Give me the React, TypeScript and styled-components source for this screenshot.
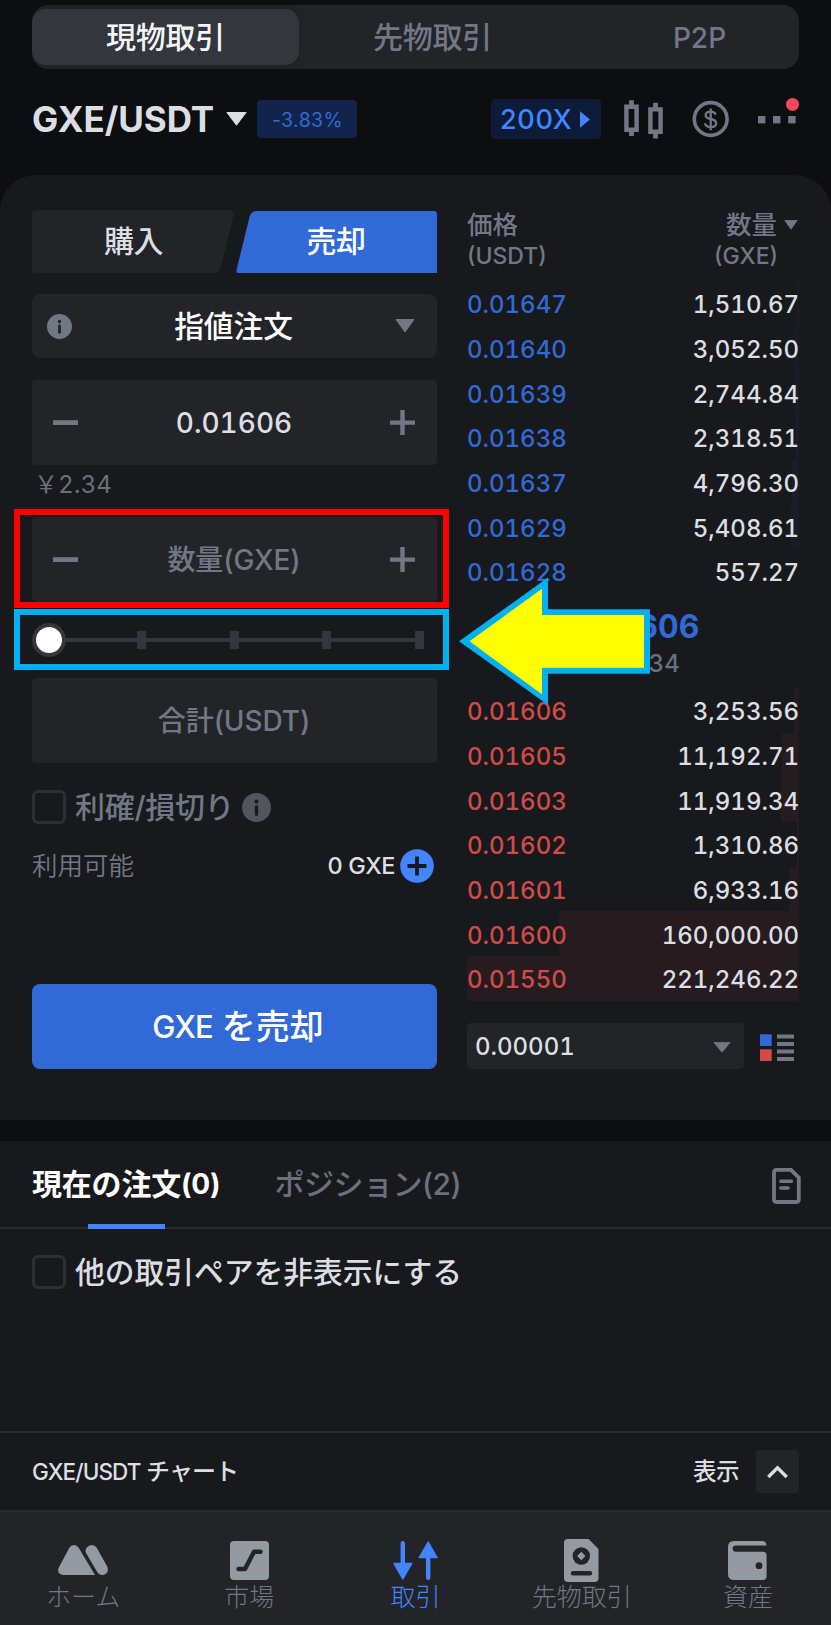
import React from 'react';
import styled, { createGlobalStyle } from 'styled-components';

const c = {
  base: '#0d0e0f',
  panel: '#18191c',
  field: '#222428',
  raised: '#33363d',
  line: '#2a2b30',
  grey: '#717785',
  dim: '#6a707d',
  text: '#dcdee3',
  white: '#ffffff',
  blue: '#316ad6',
  bright: '#4285ff',
  red: '#d14b48',
};

const GlobalStyle = createGlobalStyle`
  * { box-sizing: border-box; }
  body {
    margin: 0;
    background: ${c.base};
    font-family: Inter, "Noto Sans CJK JP", sans-serif;
  }
  svg { display: block; flex: none; }
`;

const Text = styled.span<{ $size: number; $color?: string; $weight?: number; $ls?: number; $lh?: number }>`
  font-size: ${p => p.$size}px;
  font-weight: ${p => p.$weight ?? 450};
  color: ${p => p.$color ?? c.text};
  letter-spacing: ${p => p.$ls ?? 0}px;
  line-height: ${p => p.$lh ?? 36}px;
  white-space: pre;
  flex: none;
`;

const Digits = styled(Text)`
  font-variant-numeric: tabular-nums;
`;

const Screen = styled.div`
  position: relative;
  width: 831px;
  height: 1625px;
  overflow: hidden;
  display: flex;
  flex-direction: column;
  background: ${c.base};
`;

/* ---------- market switch ---------- */
const Segments = styled.nav`
  margin: 5px 32px 0;
  height: 64px;
  flex: none;
  display: flex;
  align-items: center;
  background: ${c.field};
  border-radius: 16px;
  overflow: hidden;
`;
const Segment = styled.div<{ $active?: boolean; $drop?: number }>`
  flex: 0 0 267px;
  height: 56px;
  padding-top: ${p => p.$drop ?? 0}px;
  display: flex;
  align-items: center;
  justify-content: center;
  border-radius: 14px;
  background: ${p => (p.$active ? c.raised : 'transparent')};
  box-shadow: ${p => (p.$active ? '0 0 10px rgba(0, 0, 0, 0.12)' : 'none')};
`;

/* ---------- pair header ---------- */
const PairBar = styled.header`
  height: 106px;
  flex: none;
  display: flex;
  align-items: center;
  padding: 0 32px 6px;
`;
const PairName = styled.div`
  display: flex;
  align-items: center;
  gap: 12px;
  width: 225px;
`;
const Change = styled.div`
  width: 100px;
  height: 38px;
  padding: 2px 0 0 1px;
  display: flex;
  align-items: center;
  justify-content: center;
  border-radius: 4px;
  background: #12244b;
`;
const Leverage = styled.div`
  width: 110px;
  height: 40px;
  margin-left: auto;
  padding: 1px 11px 0 9px;
  display: flex;
  align-items: center;
  justify-content: space-between;
  border-radius: 4px;
  background: #0d1b38;
`;
const HeaderIcons = styled.div`
  width: 198px;
  padding-left: 23px;
  display: flex;
  align-items: center;
`;

/* ---------- trading panel ---------- */
const Panel = styled.main`
  height: 945px;
  flex: none;
  display: flex;
  gap: 30px;
  padding: 35px 32px 0;
  background: ${c.panel};
  border-radius: 36px 36px 0 0;
`;
const Form = styled.section`
  width: 405px;
  display: flex;
  flex-direction: column;
`;
const SideTabs = styled.div`
  height: 63px;
  display: flex;
  justify-content: space-between;
  align-items: flex-end;
`;
const BuyTab = styled.div`
  width: 202px;
  height: 63px;
  padding: 0 0 2px 1px;
  display: flex;
  align-items: center;
  justify-content: center;
  background: ${c.field};
  clip-path: path('M4 0 H197 Q203 0 201.5 6 L189 57 Q187.5 63 181 63 H4 Q0 63 0 59 V4 Q0 0 4 0 Z');
`;
const SellTab = styled.div`
  width: 201px;
  height: 62px;
  padding: 0 1px 3px 0;
  display: flex;
  align-items: center;
  justify-content: center;
  background: ${c.blue};
  clip-path: path('M21 0 H198 Q201 0 201 3 V62 H2 Q0 62 0.5 59 L13.5 6 Q15 0 21 0 Z');
`;
const OrderType = styled.div`
  height: 64px;
  margin-top: 21px;
  padding: 0 22px 0 15px;
  display: flex;
  align-items: center;
  justify-content: space-between;
  border-radius: 8px;
  background: ${c.field};
`;
const Field = styled.div<{ $top: number; $center?: boolean }>`
  height: 85px;
  margin-top: ${p => p.$top}px;
  padding: 0 22px 0 21px;
  display: flex;
  align-items: center;
  justify-content: ${p => (p.$center ? 'center' : 'space-between')};
  border-radius: 4px;
  background: ${c.field};
`;
const Fiat = styled.div`
  height: 52px;
  padding: 2px 0 0 2px;
  display: flex;
  align-items: flex-start;
`;
const Slider = styled.div`
  height: 34px;
  margin: 21px 1px 0 0;
  display: flex;
  align-items: center;
  justify-content: space-between;
  background: linear-gradient(${c.raised}, ${c.raised}) 17px 50% / 370px 4px no-repeat;
`;
const Stop = styled.div`
  width: 34px;
  display: flex;
  justify-content: center;
  &::after {
    content: '';
    width: 9px;
    height: 18px;
    background: ${c.raised};
  }
`;
const Knob = styled.div`
  width: 34px;
  height: 34px;
  border: 4px solid ${c.raised};
  border-radius: 50%;
  background: ${c.white};
`;
const CheckRow = styled.label<{ $top: number; $left?: number }>`
  height: 34px;
  margin: ${p => p.$top}px 0 0 ${p => p.$left ?? 0}px;
  display: flex;
  align-items: center;
`;
const Box = styled.span`
  width: 34px;
  height: 34px;
  margin-right: 9px;
  border: 3px solid #2c2f36;
  border-radius: 6px;
  flex: none;
`;
const HelpIcon = styled.span`
  margin-left: 8px;
`;
const Available = styled.div`
  height: 36px;
  margin-top: 24px;
  padding-right: 3px;
  display: flex;
  align-items: center;
  justify-content: space-between;
`;
const Balance = styled.div`
  display: flex;
  align-items: center;
  gap: 5px;
`;
const Submit = styled.div`
  height: 85px;
  margin-top: 100px;
  padding-left: 7px;
  display: flex;
  align-items: center;
  justify-content: center;
  gap: 9px;
  border-radius: 8px;
  background: ${c.blue};
`;

/* ---------- order book ---------- */
const Book = styled.section`
  width: 332px;
  display: flex;
  flex-direction: column;
`;
const BookHead = styled.div`
  height: 71px;
  display: flex;
  justify-content: space-between;
`;
const HeadCol = styled.div<{ $end?: boolean }>`
  display: flex;
  flex-direction: column;
  align-items: ${p => (p.$end ? 'flex-end' : 'flex-start')};
  padding-right: ${p => (p.$end ? 21 : 0)}px;
  margin-top: -1px;
`;
const SortLabel = styled.div`
  display: flex;
  align-items: center;
  gap: 7px;
  margin-right: -20px;
`;
const Level = styled.div<{ $tint: string; $depth: number }>`
  height: 44.7px;
  flex: none;
  padding: 4px 0 0;
  display: flex;
  align-items: center;
  justify-content: space-between;
  background: linear-gradient(to left, ${p => p.$tint} ${p => p.$depth}%, transparent ${p => p.$depth}%);
`;
const LastPrice = styled.div`
  height: 94px;
  flex: none;
  display: flex;
  flex-direction: column;
  align-items: center;
  padding-top: 15px;
`;
const BookFoot = styled.div`
  height: 46px;
  margin-top: 22px;
  display: flex;
  align-items: center;
  gap: 16px;
`;
const Precision = styled.div`
  width: 277px;
  height: 46px;
  padding: 3px 13px 0 8px;
  display: flex;
  align-items: center;
  justify-content: space-between;
  border-radius: 4px;
  background: ${c.field};
`;
const DepthToggle = styled.div`
  padding-top: 4px;
`;

/* ---------- orders ---------- */
const Orders = styled.section`
  height: 290px;
  margin-top: 21px;
  flex: none;
  background: ${c.panel};
`;
const OrderTabs = styled.div`
  height: 88px;
  padding: 0 30px 0 32px;
  display: flex;
  align-items: center;
  border-bottom: 2px solid ${c.line};
`;
const OrderTab = styled.div<{ $active?: boolean }>`
  position: relative;
  height: 86px;
  margin-right: ${p => (p.$active ? 54 : 0)}px;
  display: flex;
  align-items: center;
  &::after {
    content: '';
    display: ${p => (p.$active ? 'block' : 'none')};
    position: absolute;
    left: 56px;
    bottom: -2px;
    width: 77px;
    height: 5px;
    background: ${c.bright};
  }
`;
const OrderHistory = styled.div`
  margin-left: auto;
  padding-top: 3px;
`;
const ChartBar = styled.div`
  height: 79px;
  flex: none;
  padding: 0 32px;
  display: flex;
  align-items: center;
  background: ${c.panel};
  border-top: 2px solid ${c.line};
`;
const Expand = styled.div`
  width: 43px;
  height: 43px;
  margin-left: 17px;
  display: flex;
  align-items: center;
  justify-content: center;
  border-radius: 4px;
  background: ${c.field};
`;
const Spacer = styled.div`
  flex: 1;
`;

/* ---------- bottom navigation ---------- */
const BottomNav = styled.nav`
  height: 115px;
  flex: none;
  display: grid;
  grid-template-columns: repeat(5, 1fr);
  background: ${c.field};
  border-top: 2px solid ${c.line};
`;
const NavItem = styled.div`
  display: flex;
  flex-direction: column;
  align-items: center;
  padding-top: 24px;
`;
const NavIcon = styled.div`
  height: 48px;
  margin-bottom: -5px;
  display: flex;
  align-items: center;
`;

/* ---------- tutorial callouts, drawn over the screen ---------- */
const Frame = styled.div<{ $color: string; $y: number; $h: number }>`
  position: absolute;
  left: 14px;
  top: ${p => p.$y}px;
  width: 435px;
  height: ${p => p.$h}px;
  border: 6px solid ${p => p.$color};
`;
const Pointer = styled.svg`
  position: absolute;
  left: 459px;
  top: 577px;
`;

const Caret = ({ w, h, color }: { w: number; h: number; color: string }) => (
  <svg width={w} height={h} viewBox="0 0 20 14" preserveAspectRatio="none">
    <path d="M1 0.5 H19 L10 13 Z" fill={color} stroke={color} strokeWidth="1" strokeLinejoin="round" />
  </svg>
);
const Info = ({ size, color, hole }: { size: number; color: string; hole: string }) => (
  <svg width={size} height={size} viewBox="0 0 26 26">
    <circle cx="13" cy="13" r="13" fill={color} />
    <circle cx="13" cy="7.7" r="1.8" fill={hole} />
    <rect x="11.5" y="11" width="3" height="9.6" rx="1.5" fill={hole} />
  </svg>
);
const Minus = () => (
  <svg width="25" height="25" viewBox="0 0 25 25">
    <rect x="0" y="10.2" width="25" height="4.8" fill={c.grey} />
  </svg>
);
const Plus = () => (
  <svg width="25" height="25" viewBox="0 0 25 25">
    <path d="M0 12.6H25M12.5 0V25" stroke={c.grey} strokeWidth="4.4" />
  </svg>
);

const asks: [string, string][] = [
  ['0.01647', '1,510.67'],
  ['0.01640', '3,052.50'],
  ['0.01639', '2,744.84'],
  ['0.01638', '2,318.51'],
  ['0.01637', '4,796.30'],
  ['0.01629', '5,408.61'],
  ['0.01628', '557.27'],
];
const bids: [string, string][] = [
  ['0.01606', '3,253.56'],
  ['0.01605', '11,192.71'],
  ['0.01603', '11,919.34'],
  ['0.01602', '1,310.86'],
  ['0.01601', '6,933.16'],
  ['0.01600', '160,000.00'],
  ['0.01550', '221,246.22'],
];
const amount = (s: string) => Number(s.replace(/,/g, ''));
const deepest = Math.max(...[...asks, ...bids].map(l => amount(l[1])));

const Levels = ({ rows, color, tint }: { rows: [string, string][]; color: string; tint: string }) => (
  <>
    {rows.map(([price, qty]) => (
      <Level key={price} $tint={tint} $depth={(amount(qty) / deepest) * 100}>
        <Digits $size={24} $color={color}>{price}</Digits>
        <Digits $size={24}>{qty}</Digits>
      </Level>
    ))}
  </>
);

const navGrey = '#939aa2';
const navItems = [
  {
    label: 'ホーム',
    icon: (
      <svg width="50" height="30" viewBox="0 0 50 30" fill={navGrey}>
        <path d="M11.5 2.6 Q13 0 16 0 Q19 0 20.5 2.6 L37 30 H5 Q-1.8 28.6 0.8 22.4 Z" />
        <path d="M28 8 Q26.9 5.5 28.6 2.8 Q30.5 0 34 0 Q37 0 38.5 2.6 L49.2 21.5 Q51.6 28 45.5 30 Q41.5 30.4 39.5 27.5 Z" />
      </svg>
    ),
  },
  {
    label: '市場',
    icon: (
      <svg width="39" height="39" viewBox="0 0 39 39">
        <rect width="39" height="39" rx="4" fill={navGrey} />
        <path d="M8.5 28 H15 L24 10.8 H30.5" fill="none" stroke={c.field} strokeWidth="4.4" strokeLinecap="round" strokeLinejoin="round" />
      </svg>
    ),
  },
  {
    label: '取引',
    active: true,
    icon: (
      <svg width="45" height="39" viewBox="0 0 45 39" fill={c.bright} stroke={c.bright} strokeLinejoin="round">
        <path d="M9.8 2.2 V24 M35.2 36.8 V15" strokeWidth="4.4" strokeLinecap="round" />
        <path d="M1 22.5 H18.8 L9.8 38 Z M26.2 16.5 H44 L35.2 1 Z" strokeWidth="1.4" />
      </svg>
    ),
  },
  {
    label: '先物取引',
    icon: (
      <svg width="35" height="43" viewBox="0 0 35 43">
        <path d="M4 0 H24.5 L34.5 10 V39 Q34.5 43 30.5 43 H4 Q0 43 0 39 V4 Q0 0 4 0 Z" fill={navGrey} />
        <circle cx="17.3" cy="17" r="8.7" fill={c.field} />
        <path d="M17.3 12.8 L21.5 17 L17.3 21.2 L13.1 17 Z" fill={navGrey} />
        <path d="M9 34.3 H26" stroke={c.field} strokeWidth="4.4" strokeLinecap="round" />
      </svg>
    ),
  },
  {
    label: '資産',
    icon: (
      <svg width="39" height="39" viewBox="0 0 39 39">
        <path d="M6 0 H34 Q38 0 38.6 4.4 H8 Q4.6 4.4 4.6 7.6 Q4.6 10.8 8 10.8 H35 Q38.6 10.8 38.6 14.4 V35 Q38.6 39 34.6 39 H6 Q0 39 0 33 V6 Q0 0 6 0 Z" fill={navGrey} />
        <circle cx="31" cy="24.7" r="3.4" fill={c.field} />
      </svg>
    ),
  },
];

export default function App() {
  return (
    <Screen>
      <GlobalStyle />
      <Segments>
        <Segment $active><Text $size={30} $weight={500} $ls={-0.3} $color="#f4f5f7">現物取引</Text></Segment>
        <Segment><Text $size={30} $ls={-0.3} $color={c.grey}>先物取引</Text></Segment>
        <Segment $drop={2}><Text $size={28} $color={c.grey}>P2P</Text></Segment>
      </Segments>

      <PairBar>
        <PairName>
          <Text $size={35} $weight={650} $ls={-0.05}>GXE/USDT</Text>
          <Caret w={21} h={14} color={c.text} />
        </PairName>
        <Change><Text $size={19.5} $weight={400} $ls={0.4} $color={c.blue}>-3.83%</Text></Change>
        <Leverage>
          <Text $size={27} $ls={0.7} $color={c.bright}>200X</Text>
          <svg width="10" height="17" viewBox="0 0 10 17"><path d="M0 0.3 L10 8.5 L0 16.7 Z" fill={c.bright} /></svg>
        </Leverage>
        <HeaderIcons>
          <svg width="175" height="44" viewBox="624 97 175 44" fill="none" stroke={c.grey}>
            <path d="M626.4 106.8 H636.6 V129.8 H626.4 Z M650.4 109.4 H660.6 V131.8 H650.4 Z" strokeWidth="4.4" />
            <path d="M631.5 100.3 V106 M631.5 131 V136 M655.5 102.8 V108 M655.5 133 V138.6" strokeWidth="4.8" />
            <circle cx="710.7" cy="119" r="16.4" strokeWidth="3.6" />
            <path d="M715.8 114.6 Q714.8 111.6 710.7 111.6 Q705.6 111.6 705.6 115.2 Q705.6 118 710.7 119 Q716.2 120.2 716.2 123.2 Q716.2 127 710.7 127 Q705.8 127 705 123.2 M710.7 108.6 V130.2" strokeWidth="2.3" />
            <g fill={c.grey} stroke="none">
              <rect x="758" y="116" width="7.4" height="7.4" />
              <rect x="773" y="116" width="7.4" height="7.4" />
              <rect x="788.2" y="116" width="7.4" height="7.4" />
            </g>
            <circle cx="792.5" cy="104.4" r="6.5" fill="#fc4763" stroke="none" />
          </svg>
        </HeaderIcons>
      </PairBar>

      <Panel>
        <Form>
          <SideTabs>
            <BuyTab><Text $size={30} $weight={500} $ls={-0.5}>購入</Text></BuyTab>
            <SellTab><Text $size={30} $weight={500} $ls={-0.5} $color={c.white}>売却</Text></SellTab>
          </SideTabs>
          <OrderType>
            <Info size={25} color={c.grey} hole={c.field} />
            <Text $size={29.7} $weight={500} $color={c.white}>指値注文</Text>
            <Caret w={20} h={14} color={c.grey} />
          </OrderType>
          <Field $top={22}>
            <Minus />
            <Digits $size={28}>0.01606</Digits>
            <Plus />
          </Field>
          <Fiat><Text $size={24} $weight={400} $color={c.dim} $ls={0.6}>{'\uFFE5'}2.34</Text></Fiat>
          <Field $top={0}>
            <Minus />
            <Text $size={28} $color={c.grey} $ls={-0.1}>数量(GXE)</Text>
            <Plus />
          </Field>
          <Slider>
            <Knob />
            <Stop />
            <Stop />
            <Stop />
            <Stop />
          </Slider>
          <Field $top={21} $center><Text $size={28} $color={c.grey} $ls={-0.1}>合計(USDT)</Text></Field>
          <CheckRow $top={27}>
            <Box />
            <Text $size={30} $color={c.grey} $ls={-0.3}>利確/損切り</Text>
            <HelpIcon><Info size={29} color="#50555e" hole={c.panel} /></HelpIcon>
          </CheckRow>
          <Available>
            <Text $size={25.5} $weight={350} $color={c.grey}>利用可能</Text>
            <Balance>
              <Text $size={23.5} $ls={-0.4}>0 GXE</Text>
              <svg width="34" height="34" viewBox="0 0 34 34">
                <circle cx="17" cy="17" r="16.8" fill={c.bright} />
                <path d="M7.5 17 H26.5 M17 7.5 V26.5" stroke={c.panel} strokeWidth="3.8" />
              </svg>
            </Balance>
          </Available>
          <Submit>
            <Text $size={31} $ls={-0.9} $color={c.white}>GXE</Text>
            <Text $size={34} $ls={0} $color={c.white}>を売却</Text>
          </Submit>
        </Form>

        <Book>
          <BookHead>
            <HeadCol>
              <Text $size={25.5} $lh={31} $color={c.grey}>価格</Text>
              <Text $size={23} $lh={32} $color={c.grey}>(USDT)</Text>
            </HeadCol>
            <HeadCol $end>
              <SortLabel>
                <Text $size={25.5} $lh={31} $color={c.grey}>数量</Text>
                <Caret w={14} h={10} color={c.grey} />
              </SortLabel>
              <Text $size={23} $lh={32} $color={c.grey}>(GXE)</Text>
            </HeadCol>
          </BookHead>
          <Levels rows={asks} color={c.blue} tint="#191d29" />
          <LastPrice>
            <Digits $size={32} $weight={700} $color={c.blue}>0.01606</Digits>
            <Digits $size={24} $color={c.dim} $ls={0.2} $lh={38}>≈{'\uFFE5'}2.34</Digits>
          </LastPrice>
          <Levels rows={bids} color={c.red} tint="#261b1f" />
          <BookFoot>
            <Precision>
              <Digits $size={24}>0.00001</Digits>
              <Caret w={18} h={11} color={c.grey} />
            </Precision>
            <DepthToggle>
              <svg width="34" height="28" viewBox="0 0 34 28">
                <rect x="0" y="0.3" width="11.7" height="11.7" fill={c.blue} />
                <rect x="0" y="15.3" width="11.7" height="11.7" fill={c.red} />
                <path d="M17 2.4 H34 M17 9.9 H34 M17 17.4 H34 M17 24.9 H34" stroke={c.grey} strokeWidth="4" />
              </svg>
            </DepthToggle>
          </BookFoot>
        </Book>
      </Panel>

      <Orders>
        <OrderTabs>
          <OrderTab $active>
            <Text $size={30} $weight={600} $ls={-0.2} $color={c.white}>現在の注文</Text>
            <Text $size={28} $weight={700} $ls={-0.2} $color={c.white}>(0)</Text>
          </OrderTab>
          <OrderTab><Text $size={30} $ls={-0.5} $color={c.dim}>ポジション(2)</Text></OrderTab>
          <OrderHistory>
            <svg width="29" height="36" viewBox="0 0 29 36" fill="none" stroke={c.grey} strokeWidth="3.8">
              <path d="M4.4 1.9 H19 L26.8 9.6 V31.6 Q26.8 34 24.4 34 H4.4 Q2 34 2 31.6 V4.3 Q2 1.9 4.4 1.9 Z" />
              <path d="M8.8 13.2 H19.4 M8.8 20 H16" strokeLinecap="round" strokeWidth="3.6" />
            </svg>
          </OrderHistory>
        </OrderTabs>
        <CheckRow $top={26} $left={32}>
          <Box />
          <Text $size={29.8} $ls={-0.05}>他の取引ペアを非表示にする</Text>
        </CheckRow>
      </Orders>

      <ChartBar>
        <Text $size={22.5} $ls={-0.9}>GXE/USDT</Text>
        <Text $size={24} $ls={-0.9}> チャート</Text>
        <Spacer />
        <Text $size={23.5} $ls={-0.5}>表示</Text>
        <Expand>
          <svg width="21" height="14" viewBox="0 0 21 14">
            <path d="M1.3 12 L10.5 2.8 L19.7 12" fill="none" stroke={c.text} strokeWidth="3.4" />
          </svg>
        </Expand>
      </ChartBar>

      <BottomNav>
        {navItems.map(item => (
          <NavItem key={item.label}>
            <NavIcon>{item.icon}</NavIcon>
            <Text $size={25} $weight={300} $color={item.active ? c.bright : c.grey}>{item.label}</Text>
          </NavItem>
        ))}
      </BottomNav>

      <Frame $color="#ff0000" $y={509} $h={99} />
      <Frame $color="#00b0f0" $y={609} $h={61} />
      <Pointer width="192" height="129" viewBox="459 577 192 129">
        <polygon points="459,641.3 548,577.5 548,609.3 650,609.3 650,673.7 548,673.7 548,705" fill="#00b0f0" />
        <polygon points="469.5,641.3 542,588.7 542,615 644,615 644,667.7 542,667.7 542,694.3" fill="#ffff00" />
      </Pointer>
    </Screen>
  );
}
